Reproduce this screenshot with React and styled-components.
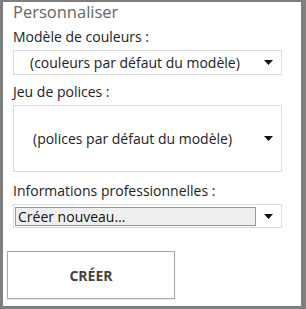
import React from 'react'
import styled, { createGlobalStyle } from 'styled-components'

const Global = createGlobalStyle`
	html, body {
		margin: 0;
		padding: 0;
		background: #fff;
	}
	body {
		font-family: 'Open Sans', 'Segoe UI', sans-serif;
	}
`

const Frame = styled.div`
	box-sizing: border-box;
	width: 306px;
	height: 309px;
	border-style: solid;
	border-color: #7f7f7f;
	border-width: 2px 5px 3px 3px;
	background: #fff;
	padding: 0 19px 0 10px;
	display: flex;
	flex-direction: column;
`

const Title = styled.h1`
	margin: 0;
	font-size: 16.5px;
	font-weight: 400;
	color: #666;
	line-height: 20px;
`

const Label = styled.div`
	font-size: 14px;
	color: #222;
	line-height: 18px;
	margin-top: ${(p) => p.top}px;
`

const Select = styled.div`
	box-sizing: border-box;
	margin-top: 4px;
	height: ${(p) => p.h}px;
	border: 1px solid #dcdcdc;
	display: flex;
	align-items: center;
	padding: 0 8px 0 ${(p) => p.pl}px;
	font-size: 14px;
	color: #222;
`

const SelectText = styled.span`
	flex: 1;
`

const Field = styled.div`
	box-sizing: border-box;
	flex: 1;
	height: 19px;
	background: #efefef;
	border: 1px solid #9a9a9a;
	padding-left: 2px;
	line-height: 17px;
	font-size: 14px;
	color: #111;
	margin-right: 8px;
`

const Arrow = styled.svg`
	width: 9px;
	height: 5px;
	flex: none;
`

const Button = styled.button`
	box-sizing: border-box;
	margin: 23px 0 0 -6px;
	width: 168px;
	height: 48px;
	border: 1px solid #a8a8a8;
	background: #fff;
	box-shadow: 0 1px 1px rgba(0, 0, 0, 0.08);
	font-family: 'Open Sans', 'Segoe UI', sans-serif;
	font-size: 14px;
	font-weight: 700;
	color: #444;
`

const Caret = () => (
	<Arrow viewBox='0 0 9 5'>
		<path d='M0 0 L9 0 L4.5 5 Z' fill='#111' />
	</Arrow>
)

export default function App() {
	return (
		<>
			<Global />
			<Frame>
				<Title>Personnaliser</Title>
				<Label top={6}>Modèle de couleurs :</Label>
				<Select h={25} pl={16}>
					<SelectText>(couleurs par défaut du modèle)</SelectText>
					<Caret />
				</Select>
				<Label top={8}>Jeu de polices :</Label>
				<Select h={67} pl={19}>
					<SelectText>(polices par défaut du modèle)</SelectText>
					<Caret />
				</Select>
				<Label top={10}>Informations professionnelles :</Label>
				<Select h={24} pl={1}>
					<Field>Créer nouveau…</Field>
					<Caret />
				</Select>
				<Button>CRÉER</Button>
			</Frame>
		</>
	)
}
